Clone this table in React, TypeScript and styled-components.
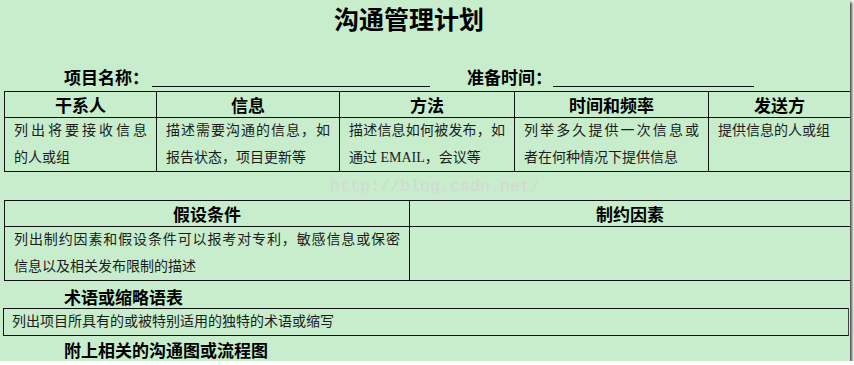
import React from "react";
import styled, { createGlobalStyle } from "styled-components";

const GlobalStyle = createGlobalStyle`
  body {
    margin: 0;
    background: #fff;
  }
`;

const Page = styled.div`
  position: relative;
  width: 850px;
  height: 361px;
  box-sizing: border-box;
  padding-left: 4px;
  background: #c7edcc;
  box-shadow: 2px 2px 3px rgba(0, 0, 0, 0.75);
  font-family: "Noto Sans CJK SC", sans-serif;
  color: #000;
  overflow: hidden;
`;

const Title = styled.h1`
  margin: 0;
  height: 36px;
  padding-right: 36px;
  font-size: 25px;
  line-height: 36px;
  font-weight: 700;
  text-align: center;
`;

const MetaRow = styled.div`
  display: flex;
  align-items: flex-end;
  height: 55px;
  box-sizing: border-box;
  padding-left: 60px;
  padding-bottom: 4px;
`;

const Label = styled.span<{ $w: number; $ml?: number }>`
  width: ${({ $w }) => $w}px;
  margin-left: ${({ $ml }) => $ml ?? 0}px;
  font-size: 17px;
  font-weight: 700;
  line-height: 20px;
  white-space: nowrap;
`;

const Blank = styled.span<{ $w: number }>`
  width: ${({ $w }) => $w}px;
  height: 20px;
  border-bottom: 1px solid #111;
`;

const Grid = styled.table<{ $mt?: number }>`
  width: 846px;
  margin-top: ${({ $mt }) => $mt ?? 0}px;
  border-collapse: collapse;
  table-layout: fixed;
`;

const Col = styled.col<{ $w: number }>`
  width: ${({ $w }) => $w}px;
`;

const HeadCell = styled.th`
  height: 25px;
  padding: 0;
  border: 1px solid #111;
  font-size: 17px;
  font-weight: 700;
  line-height: 25px;
  text-align: center;
`;

const BodyCell = styled.td`
  height: 52px;
  padding: 0 9px;
  border: 1px solid #111;
  vertical-align: top;
  font-family: "Liberation Serif", "Noto Sans CJK SC", serif;
  font-size: 14px;
  line-height: 26.5px;
  color: #1c1c1c;
`;

const Line = styled.span<{ $spread?: boolean }>`
  display: block;
  white-space: nowrap;
  text-align: ${({ $spread }) => ($spread ? "justify" : "left")};
  text-align-last: ${({ $spread }) => ($spread ? "justify" : "left")};
`;

const Section = styled.div<{ $h: number; $pt: number }>`
  height: ${({ $h }) => $h}px;
  box-sizing: border-box;
  padding: ${({ $pt }) => $pt}px 0 0 60px;
  font-size: 17px;
  font-weight: 700;
  line-height: 23px;
`;

const NoteBox = styled.div`
  width: 846px;
  height: 28px;
  margin-left: -1px;
  box-sizing: border-box;
  padding-left: 8px;
  border: 1px solid #111;
  border-right-color: #3c4a3e;
  font-family: "Liberation Serif", "Noto Sans CJK SC", serif;
  font-size: 14px;
  line-height: 26px;
  color: #1c1c1c;
`;

const Watermark = styled.div`
  position: absolute;
  top: 177px;
  left: 330px;
  font-family: "Liberation Mono", monospace;
  font-size: 17px;
  letter-spacing: -0.2px;
  color: #d3d8d3;
  pointer-events: none;
`;

const columns = [
  { title: "干系人", w: 152, lines: ["列出将要接收信息", "的人或组"] },
  { title: "信息", w: 183, lines: ["描述需要沟通的信息，如", "报告状态，项目更新等"] },
  { title: "方法", w: 175, lines: ["描述信息如何被发布，如", "通过 EMAIL，会议等"] },
  { title: "时间和频率", w: 194, lines: ["列举多久提供一次信息或", "者在何种情况下提供信息"] },
  { title: "发送方", w: 142, lines: ["提供信息的人或组"] },
];

const CellLines = ({ lines }: { lines: string[] }) => (
  <>
    {lines.map((text, i) => (
      <Line key={i} $spread={lines.length > 1 && i < lines.length - 1}>
        {text}
      </Line>
    ))}
  </>
);

export default function App() {
  return (
    <>
      <GlobalStyle />
      <Page>
        <Title>沟通管理计划</Title>
        <MetaRow>
          <Label $w={88}>项目名称：</Label>
          <Blank $w={278} />
          <Label $w={86} $ml={37}>
            准备时间：
          </Label>
          <Blank $w={201} />
        </MetaRow>

        <Grid>
          <colgroup>
            {columns.map((c) => (
              <Col key={c.title} $w={c.w} />
            ))}
          </colgroup>
          <tbody>
            <tr>
              {columns.map((c) => (
                <HeadCell key={c.title}>{c.title}</HeadCell>
              ))}
            </tr>
            <tr>
              {columns.map((c) => (
                <BodyCell key={c.title}>
                  <CellLines lines={c.lines} />
                </BodyCell>
              ))}
            </tr>
          </tbody>
        </Grid>

        <Watermark>http://blog.csdn.net/</Watermark>

        <Grid $mt={28}>
          <colgroup>
            <Col $w={405} />
            <Col $w={441} />
          </colgroup>
          <tbody>
            <tr>
              <HeadCell>假设条件</HeadCell>
              <HeadCell>制约因素</HeadCell>
            </tr>
            <tr>
              <BodyCell>
                <CellLines
                  lines={[
                    "列出制约因素和假设条件可以报考对专利，敏感信息或保密",
                    "信息以及相关发布限制的描述",
                  ]}
                />
              </BodyCell>
              <BodyCell />
            </tr>
          </tbody>
        </Grid>

        <Section $h={27} $pt={4}>
          术语或缩略语表
        </Section>
        <NoteBox>列出项目所具有的或被特别适用的独特的术语或缩写</NoteBox>
        <Section $h={25} $pt={2}>
          附上相关的沟通图或流程图
        </Section>
      </Page>
    </>
  );
}
